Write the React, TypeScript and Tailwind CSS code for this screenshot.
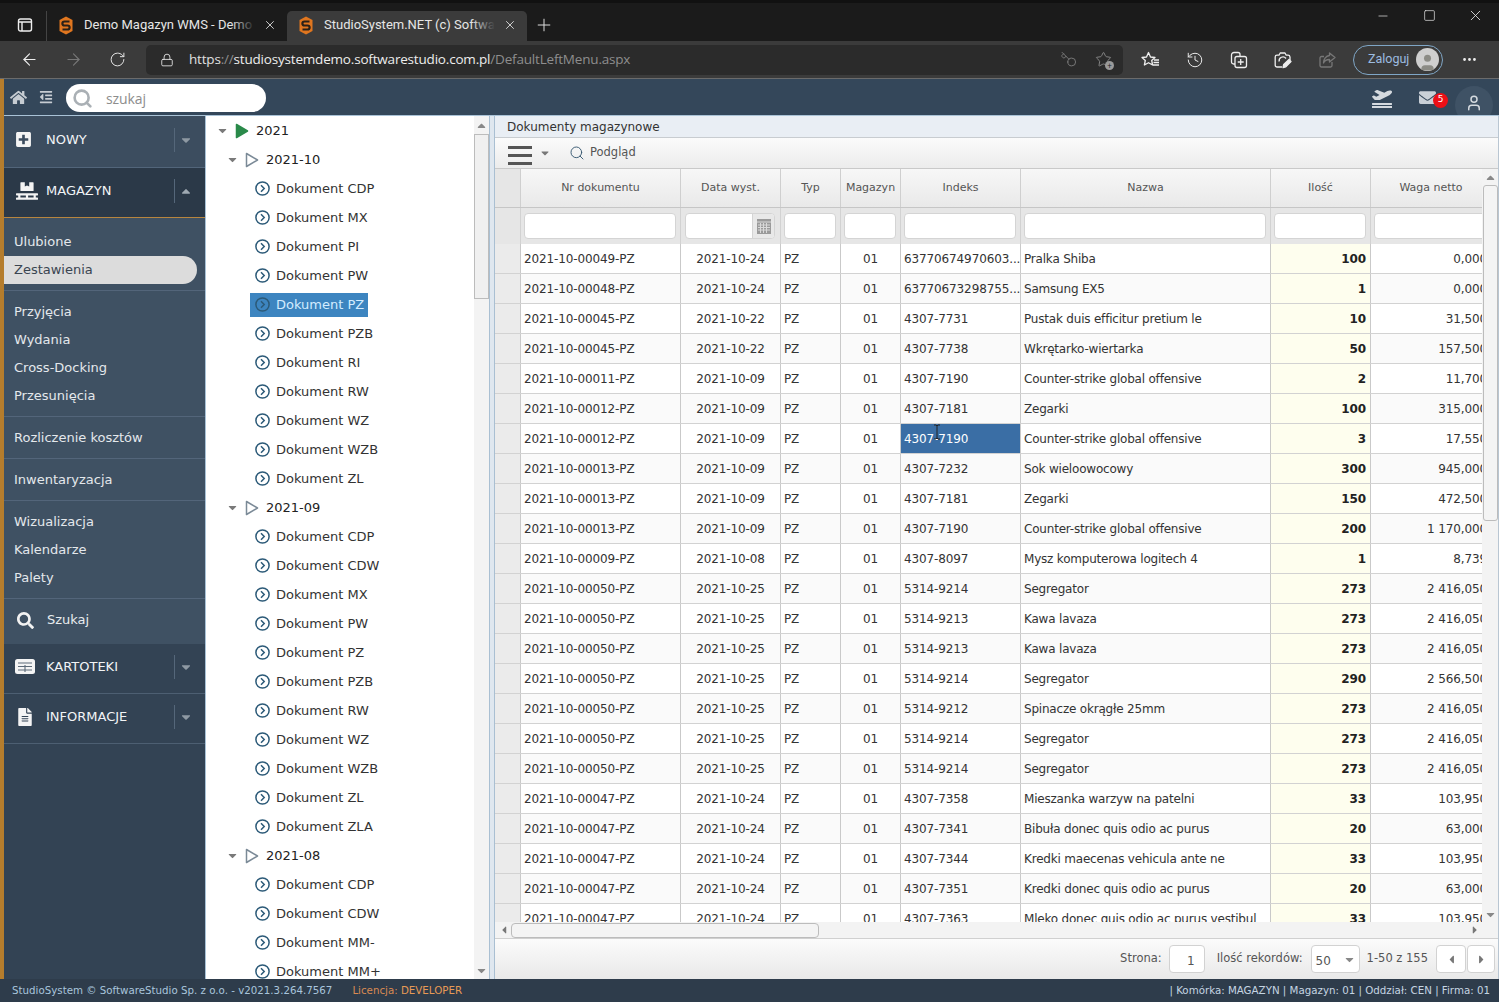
import { ReactNode } from "react";
import { X, Plus, ArrowLeft, ArrowRight, RotateCw, Lock, Key, Star, History, MoreHorizontal, Search, Minus, Square, User } from "lucide-react";
import { FaHome, FaOutdent, FaPlusSquare, FaPallet, FaSearch, FaFileAlt, FaPlaneDeparture, FaEnvelope, FaCaretDown, FaCaretUp, FaCaretLeft, FaCaretRight } from "react-icons/fa";

const columns = "grid grid-cols-[26px_160px_100px_60px_60px_120px_250px_100px_120px]";

const rows: string[][] = [
  ["2021-10-00049-PZ", "2021-10-24", "63770674970603...", "Pralka Shiba", "100", "0,000"],
  ["2021-10-00048-PZ", "2021-10-24", "63770673298755...", "Samsung EX5", "1", "0,000"],
  ["2021-10-00045-PZ", "2021-10-22", "4307-7731", "Pustak duis efficitur pretium le", "10", "31,500"],
  ["2021-10-00045-PZ", "2021-10-22", "4307-7738", "Wkrętarko-wiertarka", "50", "157,500"],
  ["2021-10-00011-PZ", "2021-10-09", "4307-7190", "Counter-strike global offensive", "2", "11,700"],
  ["2021-10-00012-PZ", "2021-10-09", "4307-7181", "Zegarki", "100", "315,000"],
  ["2021-10-00012-PZ", "2021-10-09", "4307-7190", "Counter-strike global offensive", "3", "17,550"],
  ["2021-10-00013-PZ", "2021-10-09", "4307-7232", "Sok wieloowocowy", "300", "945,000"],
  ["2021-10-00013-PZ", "2021-10-09", "4307-7181", "Zegarki", "150", "472,500"],
  ["2021-10-00013-PZ", "2021-10-09", "4307-7190", "Counter-strike global offensive", "200", "1 170,000"],
  ["2021-10-00009-PZ", "2021-10-08", "4307-8097", "Mysz komputerowa logitech 4", "1", "8,739"],
  ["2021-10-00050-PZ", "2021-10-25", "5314-9214", "Segregator", "273", "2 416,050"],
  ["2021-10-00050-PZ", "2021-10-25", "5314-9213", "Kawa lavaza", "273", "2 416,050"],
  ["2021-10-00050-PZ", "2021-10-25", "5314-9213", "Kawa lavaza", "273", "2 416,050"],
  ["2021-10-00050-PZ", "2021-10-25", "5314-9214", "Segregator", "290", "2 566,500"],
  ["2021-10-00050-PZ", "2021-10-25", "5314-9212", "Spinacze okrągłe 25mm", "273", "2 416,050"],
  ["2021-10-00050-PZ", "2021-10-25", "5314-9214", "Segregator", "273", "2 416,050"],
  ["2021-10-00050-PZ", "2021-10-25", "5314-9214", "Segregator", "273", "2 416,050"],
  ["2021-10-00047-PZ", "2021-10-24", "4307-7358", "Mieszanka warzyw na patelni", "33", "103,950"],
  ["2021-10-00047-PZ", "2021-10-24", "4307-7341", "Bibuła donec quis odio ac purus", "20", "63,000"],
  ["2021-10-00047-PZ", "2021-10-24", "4307-7344", "Kredki maecenas vehicula ante ne", "33", "103,950"],
  ["2021-10-00047-PZ", "2021-10-24", "4307-7351", "Kredki donec quis odio ac purus", "20", "63,000"],
  ["2021-10-00047-PZ", "2021-10-24", "4307-7363", "Mleko donec quis odio ac purus vestibul", "33", "103,950"],
];

type TreeRow = { label: string; level: 0 | 1 | 2; selected?: boolean };
const doc = (s: string, selected?: boolean): TreeRow => ({ label: "Dokument " + s, level: 2, selected });
const tree: TreeRow[] = [
  { label: "2021", level: 0 },
  { label: "2021-10", level: 1 },
  ...["CDP", "MX", "PI", "PW"].map((s) => doc(s)),
  doc("PZ", true),
  ...["PZB", "RI", "RW", "WZ", "WZB", "ZL"].map((s) => doc(s)),
  { label: "2021-09", level: 1 },
  ...["CDP", "CDW", "MX", "PW", "PZ", "PZB", "RW", "WZ", "WZB", "ZL", "ZLA"].map((s) => doc(s)),
  { label: "2021-08", level: 1 },
  ...["CDP", "CDW", "MM-", "MM+"].map((s) => doc(s)),
];

function Logo() {
  return (
    <svg width="14" height="19" viewBox="0 0 14 19" className="shrink-0">
      <path d="M7 0.5 13.5 4V15L7 18.5 0.5 15V4Z" fill="#e0761f" />
      <path d="M10.5 5.5H5.5Q3.4 5.5 3.4 7.5T5.5 9.5H8.5Q10.6 9.5 10.6 11.5T8.5 13.5H3.5" fill="none" stroke="#2a2118" strokeWidth="2.2" />
    </svg>
  );
}

function Tab({ title, active }: { title: string; active?: boolean }) {
  return (
    <div className={`flex h-[30px] w-[240px] items-center rounded-t-[5px] pb-[2px] pl-[12px] pr-[10px] ${active ? "bg-[#3b3b3b]" : ""}`}>
      <div className="flex w-[25px] shrink-0"><Logo /></div>
      <div className="relative w-[172px] overflow-hidden whitespace-nowrap font-['Roboto',sans-serif] text-[13px] text-[#e6e6e6]">
        {title}
        <div className={`absolute inset-y-0 right-0 w-[24px] bg-gradient-to-r from-transparent ${active ? "to-[#3b3b3b]" : "to-[#1b1b1b]"}`} />
      </div>
      <X size={14} strokeWidth={1.5} className="ml-[8px] text-[#e8e8e8]" />
    </div>
  );
}

function ToolIcon({ children, w = 44 }: { children: ReactNode; w?: number }) {
  return <div className="flex shrink-0 items-center justify-center" style={{ width: w }}>{children}</div>;
}

function BrowserChrome() {
  return (
    <>
      <div className="flex h-[41px] items-end border-t-[3px] border-[#111] bg-[#1b1b1b]">
        <div className="flex h-[30px] w-[47px] items-center justify-center border-r border-[#444] pb-[2px]">
          <svg width="16" height="16" viewBox="0 0 16 16" fill="none" stroke="#eee" strokeWidth="1.4" className="ml-[3px]">
            <rect x="1.5" y="2" width="13" height="12" rx="2" />
            <path d="M1.5 5H14.5M5 5V14" />
          </svg>
        </div>
        <Tab title="Demo Magazyn WMS - Demo online" />
        <Tab title="StudioSystem.NET (c) SoftwareStudio" active />
        <Plus size={20} strokeWidth={1.2} className="mb-[6px] ml-[7px] text-[#ddd]" />
        <div className="mb-[17px] ml-auto flex items-center text-[#e6e6e6]">
          <div className="flex w-[46px] justify-center"><Minus size={14} strokeWidth={1.2} /></div>
          <div className="flex w-[46px] justify-center"><Square size={13} strokeWidth={1.3} /></div>
          <div className="mr-[1px] flex w-[46px] justify-center"><X size={17} strokeWidth={1.2} /></div>
        </div>
      </div>
      <div className="flex h-[38px] items-center border-b border-[#6b6b6b] bg-[#3b3b3b] pl-[7px]">
        <ToolIcon><ArrowLeft size={19} strokeWidth={1.4} className="text-[#eee]" /></ToolIcon>
        <ToolIcon><ArrowRight size={19} strokeWidth={1.4} className="text-[#777]" /></ToolIcon>
        <ToolIcon><RotateCw size={17} strokeWidth={1.4} className="text-[#e4e4e4]" /></ToolIcon>
        <div className="ml-[7px] flex h-[30px] w-[977px] items-center rounded-[5px] bg-[#2b2b2b] pl-[14px]">
          <Lock size={14} strokeWidth={1.5} className="text-[#e6e6e6]" />
          <div className="ml-[15px] whitespace-nowrap font-['Open_Sans',sans-serif] text-[13.5px] tracking-[-0.19px] text-[#8e8e8e]">
            <span className="text-[#e0e0e0]">https</span>://<span className="text-[#ededed]">studiosystemdemo.softwarestudio.com.pl</span>/DefaultLeftMenu.aspx
          </div>
          <div className="ml-auto flex items-center pr-[11px]">
            <Key size={17} strokeWidth={1.3} className="mr-[18px] -scale-x-100 text-[#7d7d7d]" />
            <div className="relative">
              <Star size={17} strokeWidth={1.3} className="text-[#8a8a8a]" />
              <div className="absolute -bottom-[2px] -right-[2px] flex h-[9px] w-[9px] items-center justify-center rounded-full bg-[#9a9a9a] text-[8px] leading-none text-[#222]">+</div>
            </div>
          </div>
        </div>
        <div className="ml-[6px] flex">
          <ToolIcon>
            <svg width="20" height="18" viewBox="0 0 20 18" fill="none" stroke="#eee" strokeWidth="1.3" strokeLinejoin="round"><path d="M7.5 1.5 9.5 6 14 6.5 10.7 9.5 11.6 14 7.5 11.7 3.4 14 4.3 9.5 1 6.5 5.5 6Z" /><path d="M13 9H18M12.5 11.5H18M12 14H18" /></svg>
          </ToolIcon>
          <ToolIcon><History size={18} strokeWidth={1.3} className="text-[#eee]" /></ToolIcon>
          <ToolIcon>
            <svg width="18" height="18" viewBox="0 0 18 18" fill="none" stroke="#eee" strokeWidth="1.3"><path d="M5 13H3.5A2 2 0 0 1 1.5 11V4A2.5 2.5 0 0 1 4 1.5H8A2 2 0 0 1 10 3.5V5" /><rect x="5" y="5.5" width="11.5" height="11" rx="2" /><path d="M10.7 8V14M7.7 11H13.7" /></svg>
          </ToolIcon>
          <ToolIcon>
            <svg width="18" height="18" viewBox="0 0 18 18" fill="none" stroke="#eee" strokeWidth="1.3" strokeLinejoin="round"><path d="M8 16H3A1.8 1.8 0 0 1 1.2 14.2V6A1.8 1.8 0 0 1 3 4.2H5L6.2 2H11L12.2 4.2H14A2 2 0 0 1 16 6V9" /><path d="M5.2 10.5A3.8 3.8 0 0 1 12 7.5" /><path d="M9 16.5 9.7 13.5 15 8.5 17 10.5 11.8 15.8Z" fill="#eee" /></svg>
          </ToolIcon>
          <ToolIcon>
            <svg width="17" height="16" viewBox="0 0 17 16" fill="none" stroke="#777" strokeWidth="1.3" strokeLinejoin="round"><path d="M13 10V13.5A1.5 1.5 0 0 1 11.5 15H2.5A1.5 1.5 0 0 1 1 13.5V6A1.5 1.5 0 0 1 2.5 4.5H5" /><path d="M10.5 1 16 5.5 10.5 10V7.5C7.5 7.5 5.5 8.5 4.5 11 4.5 7 7 3.8 10.5 3.5Z" /></svg>
          </ToolIcon>
        </div>
        <div className="ml-[4px] flex h-[30px] w-[90px] items-center justify-between rounded-full border border-[#7fa6c6] pl-[14px] pr-[3px] font-['Roboto',sans-serif] text-[12.5px] text-[#9dbbe0]">
          Zaloguj
          <div className="flex h-[23px] w-[23px] items-end justify-center overflow-hidden rounded-full bg-[#cfcfcf]">
            <User size={21} strokeWidth={0} fill="#8b8b85" className="-mb-[2px]" />
          </div>
        </div>
        <MoreHorizontal size={17} className="ml-[18px] text-[#eee]" />
      </div>
    </>
  );
}

function AppHeader() {
  return (
    <div className="flex h-[36px] items-center overflow-hidden bg-[#34475a] pl-[6px] pr-[6px]">
      <FaHome size={17} className="text-[#c6ccd2]" />
      <FaOutdent size={14} className="ml-[12px] text-[#c6ccd2]" />
      <div className="ml-[13px] mt-[2px] flex h-[28px] w-[200px] items-center rounded-full bg-white pl-[6px]">
        <Search size={21} strokeWidth={3} className="text-[#aab0b5]" />
        <span className="ml-[13px] font-['Open_Sans',sans-serif] text-[14px] tracking-[-0.1px] text-[#8d8d8d]">szukaj</span>
      </div>
      <div className="ml-auto flex items-center">
        <div className="flex flex-col items-center">
          <FaPlaneDeparture size={20} className="text-[#d5dadf]" />
          <div className="-mt-[1px] h-[2px] w-[20px] bg-[#d5dadf]" />
        </div>
        <div className="relative ml-[27px] mr-[9px]">
          <FaEnvelope size={17} className="text-[#c9d0d7]" />
          <div className="absolute -right-[12px] top-[4px] flex h-[15px] w-[15px] items-center justify-center rounded-full bg-[#ed0f16] text-[9px] text-white">5</div>
        </div>
        <div className="ml-[10px] mt-[16px] flex h-[38px] w-[38px] items-center justify-center rounded-full bg-[#3f5265] pb-[4px]">
          <User size={18} strokeWidth={2} className="text-[#d5dadf]" />
        </div>
      </div>
    </div>
  );
}

function MenuHead({ icon, label, open, cls }: { icon: ReactNode; label: string; open?: boolean; cls: string }) {
  return (
    <div className={`flex items-center border-b pb-[4px] pl-[12px] ${cls}`}>
      <div className="flex w-[30px] shrink-0 justify-start">{icon}</div>
      <div className="text-[13px] text-[#f2f4f6]">{label}</div>
      <div className="ml-auto flex h-[24px] w-[31px] items-center justify-start border-l border-[#55677a] pl-[4px]">
        {open ? <FaCaretUp size={14} className="text-[#9fa9b2]" /> : <FaCaretDown size={14} className="text-[#8e99a3]" />}
      </div>
    </div>
  );
}

function SubItem({ label, active }: { label: string; active?: boolean }) {
  return (
    <div className={`flex h-[28px] items-center pl-[10px] text-[13px] ${active ? "mr-[8px] rounded-r-full bg-[#dcdcdc] text-[#3a4551]" : "text-[#e4e8ec]"}`}>{label}</div>
  );
}

function Group({ items, first }: { items: string[]; first?: boolean }) {
  return (
    <div className={`border-b border-[#53657a] pb-[6px] ${first ? "pt-[10px]" : "pt-[7px]"}`}>
      {items.map((i) => <SubItem key={i} label={i} active={i === "Zestawienia"} />)}
    </div>
  );
}

function CardIcon() {
  return (
    <svg width="20" height="15" viewBox="0 0 20 15" className="-ml-[1px]">
      <rect x="0" y="0" width="20" height="15" rx="2.5" fill="#f4f4f4" />
      <path d="M3 4H17M3 7.5H17M3 11H17M10 6V13" stroke="#5c6a78" strokeWidth="1.1" />
    </svg>
  );
}

function Sidebar() {
  return (
    <div className="flex h-full w-[201px] shrink-0 flex-col bg-[#334354]">
      <MenuHead cls="h-[52px] border-[#52657a] bg-[#3c4d5f]" icon={<FaPlusSquare size={17} className="-ml-[1px] text-[#f4f4f4]" />} label="NOWY" />
      <MenuHead cls="h-[50px] border-[#b8863f] bg-[#2b3948]" open icon={<FaPallet size={22} className="text-[#f4f4f4]" />} label="MAGAZYN" />
      <div className="bg-[#3f5163]">
        <Group first items={["Ulubione", "Zestawienia"]} />
        <Group items={["Przyjęcia", "Wydania", "Cross-Docking", "Przesunięcia"]} />
        <Group items={["Rozliczenie kosztów"]} />
        <Group items={["Inwentaryzacja"]} />
        <Group items={["Wizualizacja", "Kalendarze", "Palety"]} />
        <div className="flex h-[45px] items-center pb-[3px] pl-[13px] text-[13px] text-[#e8ecef]">
          <FaSearch size={17} className="mr-[13px] text-[#f2f2f2]" />
          Szukaj
        </div>
      </div>
      <MenuHead cls="h-[50px] border-[#4d5f72] bg-[#334354]" icon={<CardIcon />} label="KARTOTEKI" />
      <MenuHead cls="h-[50px] border-[#4d5f72] bg-[#334354]" icon={<FaFileAlt size={18} className="text-[#f4f4f4]" />} label="INFORMACJE" />
    </div>
  );
}

function Circle() {
  return (
    <svg width="15" height="15" viewBox="0 0 15 15" fill="none" stroke="#2c5a78" strokeWidth="1.5" className="shrink-0">
      <circle cx="7.5" cy="7.5" r="6.6" />
      <path d="M6 4.3 9.2 7.5 6 10.7" />
    </svg>
  );
}

function Play({ filled }: { filled?: boolean }) {
  return (
    <svg width="14" height="16" viewBox="0 0 14 16" className="shrink-0">
      <path d="M1.5 1.5 12.5 8 1.5 14.5Z" fill={filled ? "#2a8a4a" : "#fff"} stroke={filled ? "#2a8a4a" : "#7b8a97"} strokeWidth="1.5" strokeLinejoin="round" />
    </svg>
  );
}

function TreeItem({ row }: { row: TreeRow }) {
  if (row.level === 2) {
    return (
      <div className="flex h-[29px] items-center pl-[44px]">
        <div className={`flex h-[24px] items-center gap-[6px] pl-[5px] pr-[4px] ${row.selected ? "bg-[#3d85c0] font-medium text-[#d3ecff]" : "text-[#333]"}`}>
          <Circle />
          <span>{row.label}</span>
        </div>
      </div>
    );
  }
  return (
    <div className={`flex h-[29px] items-center text-[#222] ${row.level === 0 ? "pl-[11px]" : "pl-[21px]"}`}>
      <FaCaretDown size={13} className="w-[11px] text-[#7a7a7a]" />
      <div className="ml-[7px] mr-[7px]"><Play filled={row.level === 0} /></div>
      <span>{row.label}</span>
    </div>
  );
}

function TreePanel() {
  return (
    <div className="flex h-full w-[285px] shrink-0 border-l border-[#a9c2d6] bg-white">
      <div className="flex-1 overflow-hidden text-[13px]">
        {tree.map((r, i) => <TreeItem key={i} row={r} />)}
      </div>
      <div className="flex w-[16px] shrink-0 flex-col items-center border-r border-[#a9bfd2] bg-[#f3f3f3]">
        <div className="flex h-[18px] items-center"><FaCaretUp size={13} className="text-[#888]" /></div>
        <div className="h-[165px] w-[15px] border border-[#bcbcbc] bg-[#f0f0f0]" />
        <div className="mt-auto flex h-[18px] items-center"><FaCaretDown size={13} className="text-[#888]" /></div>
      </div>
    </div>
  );
}

function HeaderRow() {
  const heads = ["", "Nr dokumentu", "Data wyst.", "Typ", "Magazyn", "Indeks", "Nazwa", "Ilość", "Waga netto"];
  return (
    <div className={`${columns} h-[39px] border-b border-[#c6c6c6] bg-gradient-to-b from-[#f7f7f7] to-[#e9e9e9] text-[11px] text-[#555]`}>
      {heads.map((h, i) => (
        <div key={i} className={`flex items-center justify-center ${i < 8 ? "border-r border-[#cfcfcf]" : ""} ${i === 0 ? "bg-[#e6e6e6]" : ""}`}>{h}</div>
      ))}
    </div>
  );
}

function FilterInput({ children }: { children?: ReactNode }) {
  return <div className="flex h-[26px] flex-1 items-center justify-end overflow-hidden rounded-[4px] border border-[#d4d4d4] bg-white">{children}</div>;
}

function FilterRow() {
  return (
    <div className={`${columns} h-[36px] bg-[#e6e6e6]`}>
      {Array.from({ length: 9 }).map((_, i) => (
        <div key={i} className={`flex items-center ${i === 2 ? "pl-[4px] pr-[5px]" : "pl-[3px] pr-[4px]"} ${i < 8 ? "border-r border-[#d2d2d2]" : ""}`}>
          {i > 0 && (
            <FilterInput>
              {i === 2 && (
                <div className="flex h-full w-[22px] items-center justify-center border-l border-[#d4d4d4] bg-[#e8e8e8]">
                  <svg width="14" height="15" viewBox="0 0 14 15">
                    <rect width="14" height="15" fill="#9a9a9a" />
                    <path d="M0 3H14M1 6H13M1 8.5H13M1 11H13M3.5 4V14M6.5 4V14M9.5 4V14" stroke="#d9d9d9" strokeWidth="1" />
                  </svg>
                </div>
              )}
            </FilterInput>
          )}
        </div>
      ))}
    </div>
  );
}

function DataRow({ row, index }: { row: string[]; index: number }) {
  const cell = "flex items-center overflow-hidden whitespace-nowrap border-r border-[#c9c9c9]";
  const selected = index === 6;
  return (
    <div className={`${columns} h-[30px] shrink-0 border-b border-[#d2d2d2] text-[12px] tracking-[-0.12px] text-[#333] ${index % 2 ? "bg-[#fafafa]" : "bg-white"}`}>
      <div className={`${cell} bg-[#ebebeb]`} />
      <div className={`${cell} pl-[3px]`}>{row[0]}</div>
      <div className={`${cell} justify-center`}>{row[1]}</div>
      <div className={`${cell} pl-[3px]`}>PZ</div>
      <div className={`${cell} justify-center`}>01</div>
      <div className={`${cell} relative pl-[3px] ${selected ? "bg-[#3a6ea5] text-white" : ""}`}>
        {row[2]}
        {selected && (
          <svg width="8" height="16" viewBox="0 0 8 16" fill="none" stroke="#222" strokeWidth="1" className="absolute left-[32px] top-[0px]">
            <path d="M1 1H3L4 2 5 1H7M4 2V14M1 15H3L4 14 5 15H7" />
          </svg>
        )}
      </div>
      <div className={`${cell} pl-[3px] tracking-[-0.2px]`}>{row[3]}</div>
      <div className={`${cell} justify-end bg-[#fefeee] pr-[4px] font-bold text-[#222]`}>{row[4]}</div>
      <div className="flex items-center justify-end whitespace-nowrap pr-[4px]">{row[5]}</div>
    </div>
  );
}

function Pager() {
  const box = "rounded-[4px] border border-[#d2d2d2] bg-white";
  return (
    <div className="flex h-[40px] items-center justify-end bg-gradient-to-b from-[#fbfbfb] to-[#e9e9e9] pr-[3px] text-[11.5px] text-[#555]">
      <span>Strona:</span>
      <div className={`ml-[7px] flex h-[28px] w-[36px] items-center justify-end pr-[9px] pt-[3px] text-[12px] ${box}`}>1</div>
      <span className="ml-[12px]">Ilość rekordów:</span>
      <div className={`ml-[8px] flex h-[28px] w-[49px] items-center justify-between pl-[4px] pr-[3px] pt-[3px] text-[12px] ${box} bg-[#f2f2f2]`}>
        50 <FaCaretDown size={13} className="-mt-[3px] text-[#888]" />
      </div>
      <span className="ml-[7px]">1-50 z 155</span>
      <div className={`ml-[8px] flex h-[28px] w-[30px] items-center justify-center ${box} bg-[#f1f1f1]`}><FaCaretLeft size={13} className="text-[#777]" /></div>
      <div className={`ml-[1px] flex h-[28px] w-[28px] items-center justify-center ${box} bg-[#f1f1f1]`}><FaCaretRight size={13} className="text-[#777]" /></div>
    </div>
  );
}

function GridPanel() {
  return (
    <div className="flex h-full min-w-0 flex-1 flex-col border-r border-[#b9c6d2] bg-white">
      <div className="flex h-[22px] shrink-0 items-center border-b border-[#c8ccd0] bg-[#e9eef4] pl-[12px] text-[12px] text-[#333]">Dokumenty magazynowe</div>
      <div className="flex h-[31px] shrink-0 items-center border-b border-[#c9c9c9] bg-gradient-to-b from-[#fbfbfb] to-[#ececec] pl-[13px] text-[11.5px] text-[#555]">
        <div className="mt-[5px] flex w-[24px] flex-col gap-[5px]">
          <div className="h-[3px] bg-[#555]" /><div className="h-[3px] bg-[#555]" /><div className="h-[3px] bg-[#555]" />
        </div>
        <FaCaretDown size={12} className="ml-[7px] text-[#777]" />
        <Search size={16} strokeWidth={1.4} className="ml-[18px] text-[#35566f]" />
        <span className="ml-[5px]">Podgląd</span>
      </div>
      <div className="flex min-h-0 flex-1">
        <div className="flex min-w-0 flex-1 flex-col overflow-hidden">
          <HeaderRow />
          <FilterRow />
          <div className="flex min-h-0 flex-1 flex-col overflow-hidden">
            {rows.map((r, i) => <DataRow key={i} row={r} index={i} />)}
          </div>
        </div>
        <div className="flex w-[16px] shrink-0 flex-col items-center bg-[#f3f3f3]">
          <div className="flex h-[16px] items-center"><FaCaretUp size={13} className="text-[#888]" /></div>
          <div className="h-[336px] w-[15px] rounded-[3px] border border-[#bcbcbc] bg-[#f4f4f4]" />
          <div className="mt-auto flex h-[16px] items-center"><FaCaretDown size={13} className="text-[#888]" /></div>
        </div>
      </div>
      <div className="flex h-[17px] shrink-0 items-center border-b border-[#d0d0d0] bg-[#f3f3f3] pl-[3px] pr-[17px]">
        <FaCaretLeft size={12} className="text-[#777]" />
        <div className="ml-[1px] h-[15px] w-[308px] rounded-[4px] border border-[#bcbcbc] bg-[#f4f4f4]" />
        <FaCaretRight size={12} className="ml-auto text-[#777]" />
      </div>
      <Pager />
    </div>
  );
}

export default function App() {
  return (
    <div className="flex h-[1002px] w-[1499px] flex-col overflow-hidden bg-[#334354] font-['Noto_Sans',sans-serif]">
      <BrowserChrome />
      <div className="flex min-h-0 flex-1 flex-col border-l-4 border-[#b57d2d] font-['DejaVu_Sans',sans-serif]">
        <AppHeader />
        <div className="flex min-h-0 flex-1 border-t border-[#a9c2d6]">
          <Sidebar />
          <TreePanel />
          <div className="w-[5px] shrink-0 border-r border-[#a9bfd2] bg-[#dfe7ef]" />
          <GridPanel />
        </div>
      </div>
      <div className="flex h-[23px] shrink-0 items-center bg-[#2e3c4b] pl-[12px] pr-[9px] font-['DejaVu_Sans',sans-serif] text-[10.27px] text-[#a9c5dc]">
        <span>StudioSystem © SoftwareStudio Sp. z o.o. - v2021.3.264.7567</span>
        <span className="ml-[20px] text-[#d98a52]">Licencja: <span className="text-[#e69a55]">DEVELOPER</span></span>
        <span className="ml-auto text-[#c5d5e2]">| Komórka: MAGAZYN | Magazyn: 01 | Oddział: CEN | Firma: 01</span>
      </div>
    </div>
  );
}
